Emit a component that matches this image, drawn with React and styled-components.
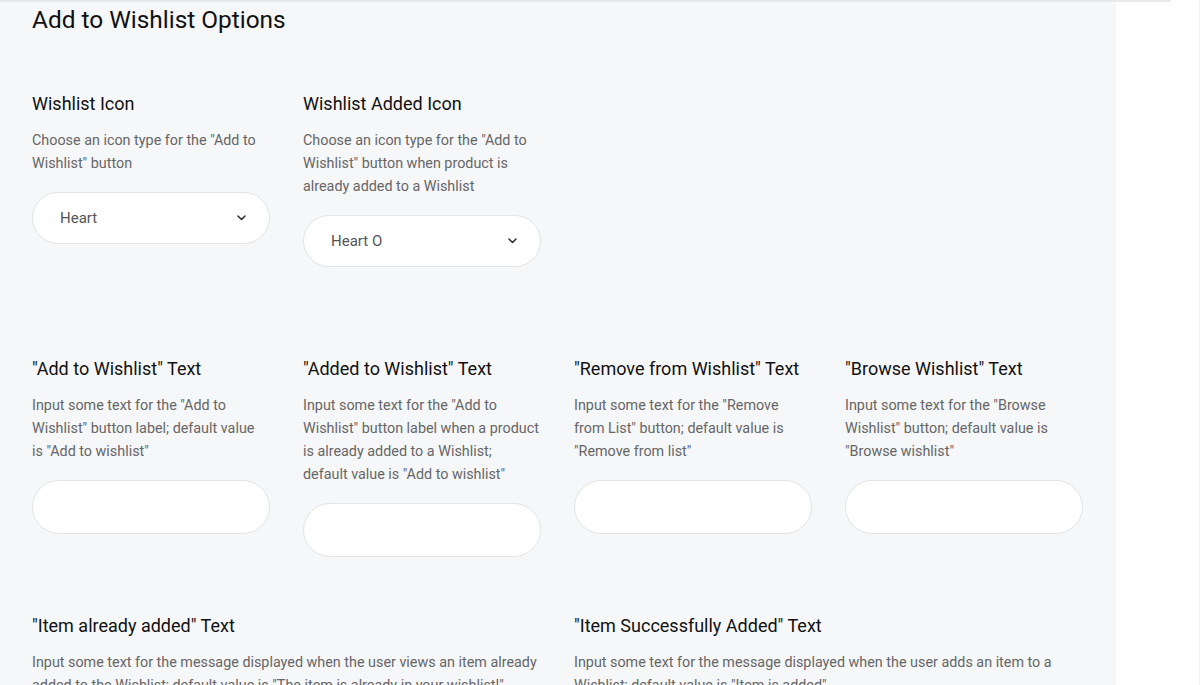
import React from 'react';
import styled, { createGlobalStyle } from 'styled-components';

const GlobalStyle = createGlobalStyle`
  html, body {
    margin: 0;
    padding: 0;
    background: #ffffff;
    overflow: hidden;
    font-family: Roboto, "Liberation Sans", Arial, sans-serif;
  }
`;

const Page = styled.div`
  position: relative;
  width: 1200px;
  height: 685px;
  border-right: 1px solid #f1f1f3;
  box-sizing: border-box;
`;

const TopLine = styled.div`
  height: 2px;
  width: 1171px;
  background: #e8e9eb;
`;

const Panel = styled.div`
  width: 1116px;
  min-height: 683px;
  box-sizing: border-box;
  background: #f6f7f9;
  padding: 3px 32px 0 32px;
`;

const Title = styled.h1`
  margin: 0;
  font-size: 24.4px;
  line-height: 30px;
  font-weight: 400;
  color: #111;
`;

const Grid = styled.div`
  display: grid;
  grid-template-columns: repeat(4, 238px);
  column-gap: 33px;
  margin-top: ${p => p.$top}px;
  align-items: start;
`;

const Field = styled.div`
  grid-column: span ${p => p.$span || 1};
`;

const Label = styled.h3`
  margin: 0;
  font-size: 18px;
  line-height: 22px;
  font-weight: 400;
  color: #111;
`;

const Help = styled.p`
  margin: 14px 0 0;
  font-size: 14.35px;
  line-height: 23px;
  color: #666;
  max-width: ${p => (p.$wide ? '509px' : '238px')};
`;

const SelectBox = styled.div`
  margin-top: 17px;
  height: 52px;
  box-sizing: border-box;
  border: 1px solid #e3e4e6;
  border-radius: 26px;
  background: #fff;
  display: flex;
  align-items: center;
  justify-content: space-between;
  padding: 0 23px 0 27px;
  font-size: 15px;
  color: #555;
`;

const TextInput = styled.input`
  display: block;
  margin-top: 17px;
  width: 238px;
  height: 54px;
  box-sizing: border-box;
  border: 1px solid #e3e4e6;
  border-radius: 27px;
  background: #fff;
  outline: none;
  padding: 0 27px;
  font-family: inherit;
  font-size: 15px;
`;

const Chevron = () => (
  <svg width="9" height="6" viewBox="0 0 9 6" fill="none">
    <path d="M1 1l3.5 3.5L8 1" stroke="#333" strokeWidth="1.6" strokeLinecap="round" strokeLinejoin="round" />
  </svg>
);

// \u00a0 keeps a few words together so lines break as in the design
const textFields = [
  {
    label: '"Add to Wishlist" Text',
    help: 'Input some text for the "Add to Wishlist" button label; default value is\u00a0"Add to wishlist"',
  },
  {
    label: '"Added to Wishlist" Text',
    help: 'Input some text for the "Add to Wishlist" button label when a product is already added to a Wishlist; default\u00a0value is "Add to wishlist"',
  },
  {
    label: '"Remove from Wishlist" Text',
    help: 'Input some text for the "Remove from List" button; default value is "Remove from list"',
  },
  {
    label: '"Browse Wishlist" Text',
    help: 'Input some text for the "Browse Wishlist" button; default value is "Browse wishlist"',
  },
];

const App = () => {
  return (
    <Page>
      <GlobalStyle />
      <TopLine />
      <Panel>
        <Title>Add to Wishlist Options</Title>

        <Grid $top={58}>
          <Field>
            <Label>Wishlist Icon</Label>
            <Help>Choose an icon type for the "Add to Wishlist" button</Help>
            <SelectBox>
              <span>Heart</span>
              <Chevron />
            </SelectBox>
          </Field>
          <Field>
            <Label>Wishlist Added Icon</Label>
            <Help>Choose an icon type for the "Add to Wishlist" button when product is already added to a Wishlist</Help>
            <SelectBox>
              <span>Heart O</span>
              <Chevron />
            </SelectBox>
          </Field>
        </Grid>

        <Grid $top={91}>
          {textFields.map(f => (
            <Field key={f.label}>
              <Label>{f.label}</Label>
              <Help>{f.help}</Help>
              <TextInput type="text" />
            </Field>
          ))}
        </Grid>

        <Grid $top={58}>
          <Field $span={2}>
            <Label>"Item already added" Text</Label>
            <Help $wide>
              Input some text for the message displayed when the user views an item already added to the Wishlist; default value is "The item is already in your wishlist!"
            </Help>
          </Field>
          <Field $span={2}>
            <Label>"Item Successfully Added" Text</Label>
            <Help $wide>
              Input some text for the message displayed when the user adds an item to a Wishlist; default value is "Item is added"
            </Help>
          </Field>
        </Grid>
      </Panel>
    </Page>
  );
};

export default App;
